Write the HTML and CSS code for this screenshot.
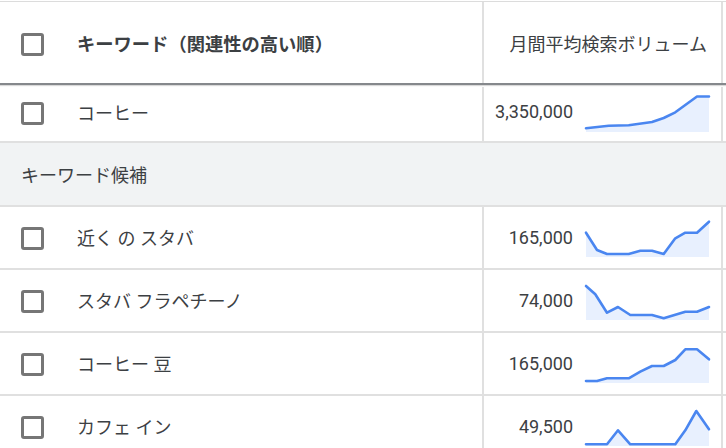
FILE: index.html
```html
<!DOCTYPE html>
<html lang="ja">
<head>
<meta charset="utf-8">
<link rel="stylesheet" href="styles.css">
</head>
<body>
<div class="table">
  <div class="row head">
    <div class="c1"><span class="cb"></span><span class="label bold">キーワード（関連性の高い順）</span></div>
    <div class="c2"><span class="label">月間平均検索ボリューム</span></div>
  </div>
  <div class="row first">
    <div class="c1"><span class="cb"></span><span class="label">コーヒー</span></div>
    <div class="c2"><span class="num">3,350,000</span>
      <svg class="spark" viewBox="0 0 123 37" width="123" height="37"><polygon class="fill" points="0,33.3 22.7,30.7 42.7,30.3 66,27 77.7,23 89.3,17.3 111,1.5 123,1.5 123,37 0,37"/><polyline class="line" points="0,33.3 22.7,30.7 42.7,30.3 66,27 77.7,23 89.3,17.3 111,1.5 123,1.5"/></svg>
    </div>
  </div>
  <div class="group">キーワード候補</div>
  <div class="row">
    <div class="c1"><span class="cb"></span><span class="label">近く の スタバ</span></div>
    <div class="c2"><span class="num">165,000</span>
      <svg class="spark" viewBox="0 0 123 37" width="123" height="37"><polygon class="fill" points="0,12.7 11,30 21,34 42.7,34 54.3,30.7 66,30.7 77.7,34 89.3,18.3 99.3,12.7 111,12.7 123,1.7 123,37 0,37"/><polyline class="line" points="0,12.7 11,30 21,34 42.7,34 54.3,30.7 66,30.7 77.7,34 89.3,18.3 99.3,12.7 111,12.7 123,1.7"/></svg>
    </div>
  </div>
  <div class="row">
    <div class="c1"><span class="cb"></span><span class="label">スタバ フラペチーノ</span></div>
    <div class="c2"><span class="num">74,000</span>
      <svg class="spark" viewBox="0 0 123 37" width="123" height="37"><polygon class="fill" points="0,3 9.3,11.3 21,29.7 32,24 44.3,32 66,32 77.7,35.3 99.3,28.7 111,28.7 123,24 123,37 0,37"/><polyline class="line" points="0,3 9.3,11.3 21,29.7 32,24 44.3,32 66,32 77.7,35.3 99.3,28.7 111,28.7 123,24"/></svg>
    </div>
  </div>
  <div class="row">
    <div class="c1"><span class="cb"></span><span class="label">コーヒー 豆</span></div>
    <div class="c2"><span class="num">165,000</span>
      <svg class="spark" viewBox="0 0 123 37" width="123" height="37"><polygon class="fill" points="0,35 11,35 21,32.3 42.7,32.3 54.3,25.7 66,20 77.7,20 89.3,14 99.3,3.3 111,3.3 123,13.3 123,37 0,37"/><polyline class="line" points="0,35 11,35 21,32.3 42.7,32.3 54.3,25.7 66,20 77.7,20 89.3,14 99.3,3.3 111,3.3 123,13.3"/></svg>
    </div>
  </div>
  <div class="row">
    <div class="c1"><span class="cb"></span><span class="label">カフェ イン</span></div>
    <div class="c2"><span class="num">49,500</span>
      <svg class="spark" viewBox="0 0 123 37" width="123" height="37"><polygon class="fill" points="0,35.3 21,35.3 32,21.3 44.3,35.3 89.3,35.3 99.3,21.3 110.3,2 123,20.3 123,37 0,37"/><polyline class="line" points="0,35.3 21,35.3 32,21.3 44.3,35.3 89.3,35.3 99.3,21.3 110.3,2 123,20.3"/></svg>
    </div>
  </div>
</div>
</body>
</html>
```
FILE: styles.css
```css
html, body {
  margin: 0;
  padding: 0;
  background: #ffffff;
}
body {
  width: 726px;
  height: 448px;
  overflow: hidden;
  font-family: Roboto, "Noto Sans CJK JP", sans-serif;
  font-size: 18px;
  color: #3c4043;
}
.table {
  margin-top: 1px;
  border-top: 1px solid #dcdcdc;
}
.row {
  display: flex;
  height: 61px;
  border-bottom: 2px solid #e0e0e0;
}
.row.head {
  height: 81px;
  border-bottom: 2px solid #85888c;
  box-shadow: 0 1px 1px rgba(0, 0, 0, 0.15);
}
.row.first {
  height: 54px;
  margin-top: 2px;
}
.c1 {
  width: 484px;
  box-sizing: border-box;
  border-right: 2px solid #e0e0e0;
  display: flex;
  align-items: center;
  padding-left: 21px;
  padding-top: 2px;
}
.c2 {
  width: 239px;
  box-sizing: border-box;
  border-right: 2px solid #e0e0e0;
  display: flex;
  align-items: center;
  justify-content: flex-end;
  padding-right: 12px;
  gap: 13px;
  padding-top: 2px;
}
.head .c1, .head .c2 {
  padding-top: 4px;
}
.head .c2 {
  padding-right: 14px;
}
.first .c1, .first .c2 {
  padding-top: 0;
  padding-bottom: 2px;
}
.cb {
  width: 17px;
  height: 17px;
  border: 3px solid #767676;
  border-radius: 3px;
  flex: none;
  margin-right: 33px;
}
.label, .num {
  white-space: nowrap;
  margin-bottom: 3px;
}
.bold {
  font-weight: 700;
  font-size: 18.3px;
}
.spark {
  display: block;
  flex: none;
  overflow: visible;
}
.fill {
  fill: #e8f0fe;
}
.line {
  fill: none;
  stroke: #4a86f0;
  stroke-width: 2.6;
  stroke-linejoin: round;
  stroke-linecap: round;
}
.group {
  height: 62px;
  background: #f1f3f4;
  border-bottom: 2px solid #e0e0e0;
  display: flex;
  align-items: center;
  padding-left: 21px;
}
.group::before {
  content: "";
}
```
